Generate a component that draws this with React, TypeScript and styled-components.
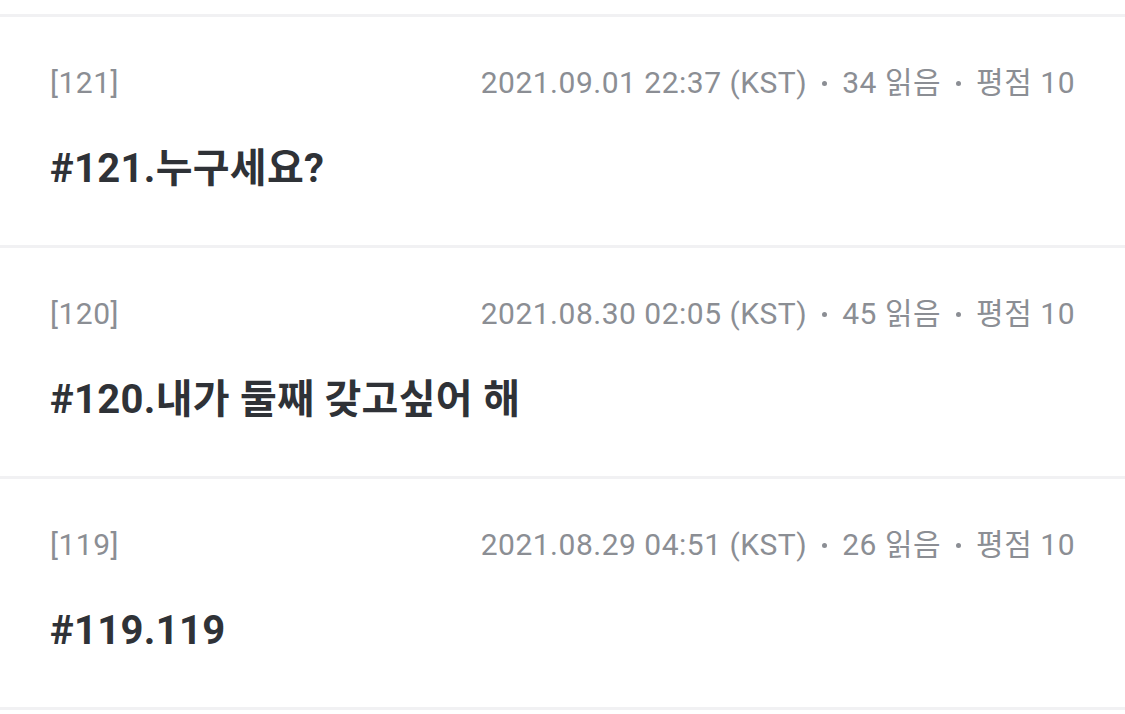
import React from "react";
import styled, { createGlobalStyle } from "styled-components";

const Global = createGlobalStyle`
  html, body { margin: 0; padding: 0; background: #ffffff; }
  body { font-family: Roboto, "Noto Sans CJK KR", sans-serif; }
`;

const List = styled.div`
  display: flex;
  flex-direction: column;
  padding-top: 14px;
`;

const Divider = styled.div`
  height: 3px;
  background: #f1f1f3;
`;

const Item = styled.div`
  display: flex;
  flex-direction: column;
  padding: 46px 50px 0 50px;
  height: 228px;
  box-sizing: border-box;
`;

const MetaRow = styled.div`
  display: flex;
  justify-content: space-between;
  align-items: center;
  height: 40px;
  font-size: 30px;
  line-height: 40px;
  letter-spacing: 0.5px;
  color: #8b8e94;
`;

const Info = styled.div`
  display: flex;
  align-items: center;
`;

const Dot = styled.span`
  display: inline-block;
  width: 5px;
  height: 5px;
  border-radius: 50%;
  background: #8b8e94;
  margin: 0 15px;
`;

const Title = styled.div`
  margin-top: 40px;
  font-size: 40px;
  line-height: 52px;
  letter-spacing: 0.3px;
  font-weight: 700;
  color: #2f3237;
`;

type Ep = { no: number; date: string; reads: number; rating: number; title: string };

const eps: Ep[] = [
  { no: 121, date: "2021.09.01 22:37 (KST)", reads: 34, rating: 10, title: "#121.누구세요?" },
  { no: 120, date: "2021.08.30 02:05 (KST)", reads: 45, rating: 10, title: "#120.내가 둘째 갖고싶어 해" },
  { no: 119, date: "2021.08.29 04:51 (KST)", reads: 26, rating: 10, title: "#119.119" },
];

export default function App() {
  return (
    <>
      <Global />
      <List>
        {eps.map((e) => (
          <React.Fragment key={e.no}>
            <Divider />
            <Item>
              <MetaRow>
                <span>[{e.no}]</span>
                <Info>
                  <span>{e.date}</span>
                  <Dot />
                  <span>{e.reads} 읽음</span>
                  <Dot />
                  <span>평점 {e.rating}</span>
                </Info>
              </MetaRow>
              <Title>{e.title}</Title>
            </Item>
          </React.Fragment>
        ))}
        <Divider />
      </List>
    </>
  );
}
